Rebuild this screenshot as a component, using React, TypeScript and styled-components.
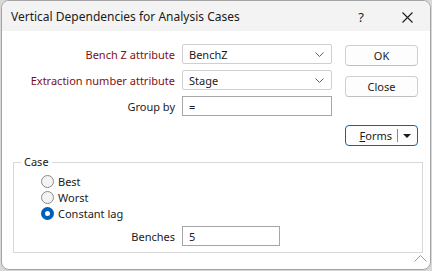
import React from 'react';
import styled, {createGlobalStyle} from 'styled-components';

const GlobalStyle = createGlobalStyle`
  html, body {
    margin: 0;
    padding: 0;
    background: #d8d8d8;
  }
  body {
    font-family: "Noto Sans", "Open Sans", sans-serif;
    font-size: 11px;
    color: #1b1b1b;
  }
`;

/**
 * 下拉箭頭
 */
const Chevron = () => (
    <svg width="9" height="5" viewBox="0 0 9 5">
        <path d="M0.5 0.5 L4.5 4.5 L8.5 0.5" fill="none" stroke="#606060" strokeWidth="1"/>
    </svg>
);

const CloseIcon = () => (
    <svg width="11" height="11" viewBox="0 0 11 11">
        <path d="M0.5 0.5 L10.5 10.5 M10.5 0.5 L0.5 10.5" stroke="#1b1b1b" strokeWidth="1.1"/>
    </svg>
);

const Grip = () => (
    <svg width="13" height="7" viewBox="0 0 13 7">
        <path d="M0.5 6.5 L6.5 0.5 L12.5 6.5" fill="none" stroke="#9a9a9a" strokeWidth="1"/>
    </svg>
);

const Radio = ({label, checked}: {label: string; checked?: boolean}) => (
    <RadioRow>
        <RadioDot checked={checked}/>
        <span>{label}</span>
    </RadioRow>
);


const App = () => {
    return (
        <>
            <GlobalStyle/>
            <Window>
                <TitleBar>
                    <Title>Vertical Dependencies for Analysis Cases</Title>
                    <HelpGlyph>?</HelpGlyph>
                    <CloseBox><CloseIcon/></CloseBox>
                </TitleBar>

                <Body>
                    <TopRow>
                        <FormGrid>
                            <Label required>Bench Z attribute</Label>
                            <Select>
                                <span>BenchZ</span>
                                <Chevron/>
                            </Select>

                            <Label required>Extraction number attribute</Label>
                            <Select>
                                <span>Stage</span>
                                <Chevron/>
                            </Select>

                            <Label>Group by</Label>
                            <TextField>=</TextField>
                        </FormGrid>

                        <ButtonColumn>
                            <Button>OK</Button>
                            <Button>Close</Button>
                        </ButtonColumn>
                    </TopRow>

                    <FormsRow>
                        <SplitButton>
                            <SplitLabel><u>F</u>orms</SplitLabel>
                            <SplitDivider/>
                            <SplitArrow/>
                        </SplitButton>
                    </FormsRow>

                    <GroupBox>
                        <Legend>Case</Legend>
                        <RadioList>
                            <Radio label="Best"/>
                            <Radio label="Worst"/>
                            <Radio label="Constant lag" checked/>
                        </RadioList>
                        <BenchRow>
                            <Label>Benches</Label>
                            <TextField width={98}>5</TextField>
                        </BenchRow>
                    </GroupBox>
                </Body>

                <GripCorner><Grip/></GripCorner>
            </Window>
        </>
    );
};

export default App;




const Window = styled.div`
    position: relative;
    box-sizing: border-box;
    width: 430px;
    height: 270px;
    margin-left: 1px;
    background: #ffffff;
    border: 1px solid #a3a3a3;
    border-radius: 8px;
    overflow: hidden;
    display: flex;
    flex-direction: column;
`;

const TitleBar = styled.div`
    height: 30px;
    flex: none;
    background: #f3f3f3;
    display: flex;
    align-items: center;
    padding-left: 9px;
`;

const Title = styled.div`
    flex: 1;
    font-size: 12px;
    color: #1b1b1b;
    padding-top: 1px;
`;

const HelpGlyph = styled.div`
    width: 46px;
    text-align: center;
    font-size: 13px;
    padding-top: 1px;
`;

const CloseBox = styled.div`
    width: 46px;
    display: flex;
    justify-content: center;
    padding-top: 2px;
`;

const Body = styled.div`
    flex: 1;
    display: flex;
    flex-direction: column;
    padding: 13px 7px 0 11px;
`;

const TopRow = styled.div`
    display: flex;
    align-items: flex-start;
`;

const FormGrid = styled.div`
    display: grid;
    grid-template-columns: 162px 150px;
    grid-auto-rows: 20px;
    column-gap: 7px;
    row-gap: 6px;
`;

const Label = styled.div<{required?: boolean}>`
    display: flex;
    align-items: center;
    justify-content: flex-end;
    white-space: nowrap;
    color: ${p => p.required ? '#7f0f14' : '#1b1b1b'};
`;

const Field = styled.div`
    box-sizing: border-box;
    height: 20px;
    border: 1px solid #ababab;
    background: #fff;
    display: flex;
    align-items: center;
    padding: 0 6px;
`;

const Select = styled(Field)`
    justify-content: space-between;
    border-color: #cfcfcf;
    border-radius: 2px;
    padding-right: 7px;
`;

const TextField = styled(Field)<{width?: number}>`
    width: ${p => p.width ? `${p.width}px` : 'auto'};
    border-color: #a6a6a6;
`;

const ButtonColumn = styled.div`
    display: flex;
    flex-direction: column;
    gap: 10px;
    margin: 1px 0 0 13px;
`;

const Button = styled.div`
    box-sizing: border-box;
    width: 73px;
    height: 21px;
    border: 1px solid #d0d0d0;
    border-bottom-color: #c0c0c0;
    border-radius: 4px;
    background: #fdfdfd;
    display: flex;
    align-items: center;
    justify-content: center;
`;

const FormsRow = styled.div`
    display: flex;
    justify-content: flex-end;
    margin: 9px 5px 0 0;
`;

const SplitButton = styled(Button)`
    border: 1px solid #0067c0;
    justify-content: flex-end;
    padding-right: 6px;
`;

const SplitLabel = styled.span`
    margin-right: 5px;
`;

const SplitDivider = styled.span`
    width: 1px;
    height: 13px;
    background: #8a8a8a;
    margin-right: 5px;
`;

const SplitArrow = styled.span`
    width: 0;
    height: 0;
    border-left: 4px solid transparent;
    border-right: 4px solid transparent;
    border-top: 4px solid #1b1b1b;
`;

const GroupBox = styled.fieldset`
    margin: 8px 0 0 0;
    padding: 0 0 6px 0;
    border: 1px solid #d8d8d8;
    border-radius: 0;
    min-width: 0;
`;

const Legend = styled.legend`
    margin-left: 7px;
    padding: 0 3px;
    line-height: 16px;
`;

const RadioList = styled.div`
    display: flex;
    flex-direction: column;
    padding: 3px 0 0 27px;
`;

const RadioRow = styled.div`
    height: 16px;
    display: flex;
    align-items: center;
    gap: 4px;
`;

const RadioDot = styled.span<{checked?: boolean}>`
    box-sizing: border-box;
    width: 13px;
    height: 13px;
    border-radius: 50%;
    border: ${p => p.checked ? '4px solid #005fb8' : '1px solid #8a8a8a'};
    background: ${p => p.checked ? '#ffffff' : '#f3f3f3'};
`;

const BenchRow = styled.div`
    display: grid;
    grid-template-columns: 161px auto;
    grid-auto-rows: 20px;
    column-gap: 7px;
    justify-content: start;
    margin-top: 5px;
`;

const GripCorner = styled.div`
    position: absolute;
    right: 3px;
    bottom: 7px;
    line-height: 0;
`;
